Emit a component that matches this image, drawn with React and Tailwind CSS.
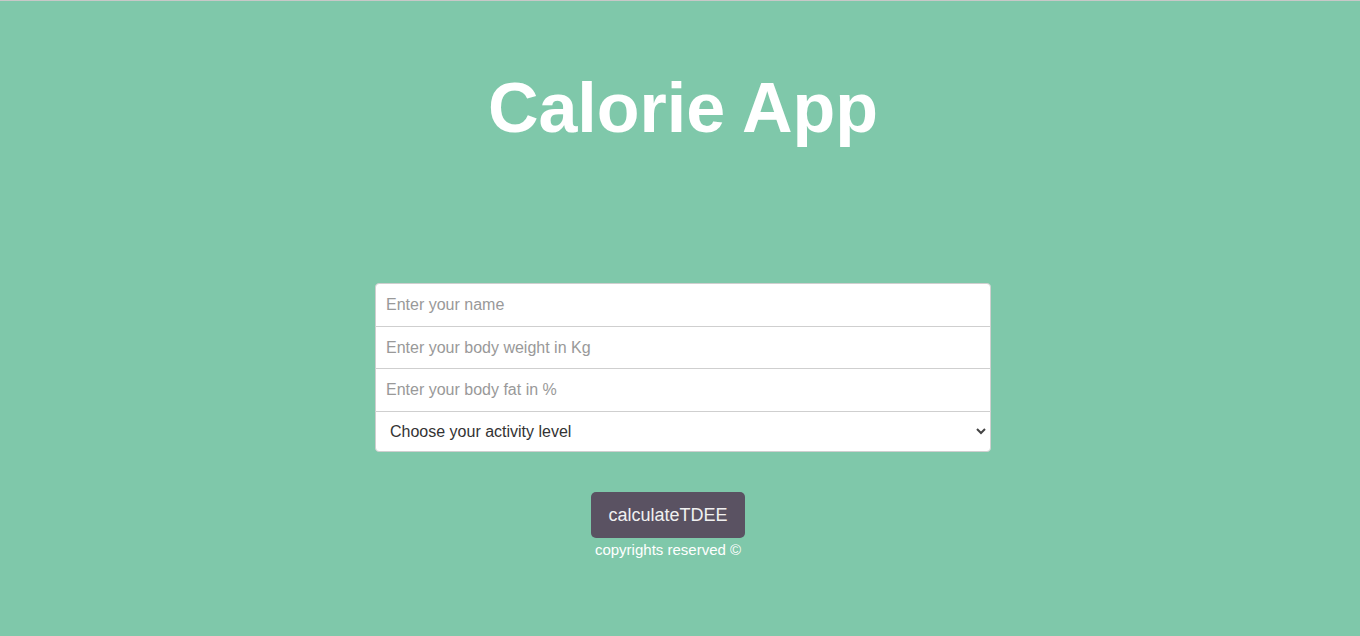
export default function App() {
  return (
    <div className="min-h-[636px] bg-[#7fc8aa] border-t border-[#c8c8c8] pl-[6px] flex flex-col items-center font-['Liberation_Sans',Arial,sans-serif]">
      <h1 className="mt-[67px] text-[70px] leading-[80px] font-bold text-white">Calorie App</h1>

      <form className="mt-[135px] w-[616px] flex flex-col" onSubmit={(e) => e.preventDefault()}>
        <input
          type="text"
          placeholder="Enter your name"
          className="h-[44px] px-[10px] bg-white border border-[#cfcfcf] rounded-t-[4px] text-[16px] text-[#333] placeholder:text-[#999] outline-none"
        />
        <input
          type="text"
          placeholder="Enter your body weight in Kg"
          className="h-[43px] -mt-px px-[10px] bg-white border border-[#cfcfcf] text-[16px] text-[#333] placeholder:text-[#999] outline-none"
        />
        <input
          type="text"
          placeholder="Enter your body fat in %"
          className="h-[44px] -mt-px px-[10px] bg-white border border-[#cfcfcf] text-[16px] text-[#333] placeholder:text-[#999] outline-none"
        />
        <div className="relative -mt-px">
          <select className="w-full h-[41px] pl-[14px] pr-8 appearance-none bg-white border border-[#cfcfcf] rounded-b-[4px] text-[16px] text-[#333] outline-none">
            <option>Choose your activity level</option>
            <option>Sedentary</option>
            <option>Lightly active</option>
            <option>Moderately active</option>
            <option>Very active</option>
          </select>
          <svg className="absolute right-[5px] top-[16px] pointer-events-none" width="10" height="8" viewBox="0 0 10 8">
            <path d="M1 2l4 4 4-4" fill="none" stroke="#444" strokeWidth="2" />
          </svg>
        </div>

        <div className="mt-[40px] mr-[30px] flex flex-col items-center">
          <button type="submit" className="w-[154px] h-[46px] rounded-[5px] bg-[#5a5262] text-[18px] text-[#f0f0f0]">
            calculateTDEE
          </button>
          <p className="mt-[2px] text-[15px] leading-[20px] text-white">copyrights reserved ©</p>
        </div>
      </form>
    </div>
  );
}
